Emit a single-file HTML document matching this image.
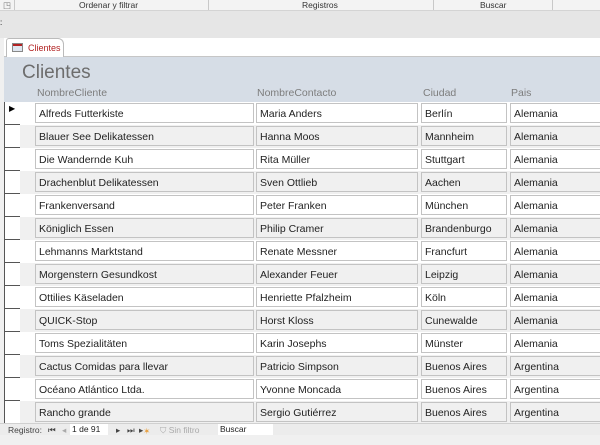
<!DOCTYPE html>
<html><head><style>
*{margin:0;padding:0;box-sizing:border-box}
body{width:600px;height:445px;overflow:hidden;background:#f0f0f0;font-family:"Liberation Sans",sans-serif;position:relative}
.abs{position:absolute}
.rib{top:0;left:0;width:600px;height:11px;background:#f3f3f3;border-bottom:1px solid #d4d4d4;font-size:8.5px;color:#333}
.rib span{position:absolute;top:0}
.sep{position:absolute;top:0;width:1px;height:10px;background:#c8c8c8}
.gray{top:11px;left:0;width:600px;height:27px;background:#e6e6e6}
.tabbar{top:38px;left:4px;width:596px;height:19px;background:#fff;border-bottom:1px solid #c6c6c6}
.tab{top:38px;left:6px;width:58px;height:20px;background:#fff;border:1px solid #bbb;border-bottom:none;border-radius:3px 6px 0 0;font-size:9px;color:#b22222;padding:4px 0 0 21px}
.hdr{top:57px;left:4px;width:596px;height:45px;background:#d6dde6}
.title{top:62px;left:22px;font-size:19px;color:#6d6d6d}
.lab{top:87px;font-size:10.5px;color:#7d7d7d}
.row{position:absolute;left:20px;width:580px;height:23px}
.sel{position:absolute;left:4px;width:17px;height:23px;border:1px solid #555;border-top:none;background:#fff}
.box{position:absolute;top:1px;height:20px;border:1px solid #c3c3c3;font-size:10.5px;color:#222;padding:4px 0 0 3px;white-space:nowrap;overflow:hidden}
.stat{top:423px;left:0;width:600px;height:12px;background:#ececec;border-top:1px solid #d0d0d0;font-size:8.5px;color:#444}
.stat span{position:absolute;top:1px}
</style></head><body>
<div class="abs rib"><span style="left:3px;color:#777">◳</span><div class="sep" style="left:14px"></div><span style="left:79px">Ordenar y filtrar</span><div class="sep" style="left:208px"></div><span style="left:302px">Registros</span><div class="sep" style="left:433px"></div><span style="left:480px">Buscar</span><div class="sep" style="left:552px"></div></div>
<div class="abs gray"><span style="position:absolute;left:0;top:7px;font-size:8px">:</span></div>
<div class="abs tabbar"></div>
<div class="abs tab"><div style="position:absolute;left:5px;top:4px;width:11px;height:9px;border:1px solid #888;background:#dfe6f0"><div style="height:2px;background:#b22222"></div></div>Clientes</div>
<div class="abs hdr"></div>
<div class="abs title">Clientes</div>
<div class="abs lab" style="left:37px">NombreCliente</div>
<div class="abs lab" style="left:257px">NombreContacto</div>
<div class="abs lab" style="left:423px">Ciudad</div>
<div class="abs lab" style="left:511px">Pais</div>
<div id="rows"></div>
<div class="abs stat"><span style="left:8px">Registro:</span><span style="left:48px">⏮</span><span style="left:62px;color:#aaa">◂</span><span style="left:70px;top:0;background:#fff;width:38px;height:11px;padding-left:2px;color:#222">1 de 91</span><span style="left:116px">▸</span><span style="left:127px">⏭</span><span style="left:139px">▸<span style="color:#e8a040">✶</span></span><span style="left:160px;color:#aaa">⛉ Sin filtro</span><span style="left:218px;top:0;background:#fff;width:55px;height:11px;padding-left:2px;color:#222">Buscar</span></div>
<script>
var d=[["Alfreds Futterkiste","Maria Anders","Berlín","Alemania"],["Blauer See Delikatessen","Hanna Moos","Mannheim","Alemania"],["Die Wandernde Kuh","Rita Müller","Stuttgart","Alemania"],["Drachenblut Delikatessen","Sven Ottlieb","Aachen","Alemania"],["Frankenversand","Peter Franken","München","Alemania"],["Königlich Essen","Philip Cramer","Brandenburgo","Alemania"],["Lehmanns Marktstand","Renate Messner","Francfurt","Alemania"],["Morgenstern Gesundkost","Alexander Feuer","Leipzig","Alemania"],["Ottilies Käseladen","Henriette Pfalzheim","Köln","Alemania"],["QUICK-Stop","Horst Kloss","Cunewalde","Alemania"],["Toms Spezialitäten","Karin Josephs","Münster","Alemania"],["Cactus Comidas para llevar","Patricio Simpson","Buenos Aires","Argentina"],["Océano Atlántico Ltda.","Yvonne Moncada","Buenos Aires","Argentina"],["Rancho grande","Sergio Gutiérrez","Buenos Aires","Argentina"]];
var x=[[35,219],[256,162],[421,86],[510,95]],h="";
d.forEach(function(r,i){var t=102+i*23,bg=i%2?"#f0f0f0":"#fff";
h+='<div class="sel" style="top:'+t+'px">'+(i==0?'<span style="font-size:8px;position:absolute;left:4px;top:2px">▶</span>':'')+'</div>';
h+='<div class="row" style="top:'+t+'px;background:'+bg+'"></div>';
r.forEach(function(v,j){h+='<div class="box" style="left:'+x[j][0]+'px;width:'+x[j][1]+'px;top:'+(t+1)+'px;background:'+bg+'">'+v+'</div>'});});
document.getElementById('rows').innerHTML=h;
</script>
</body></html>
